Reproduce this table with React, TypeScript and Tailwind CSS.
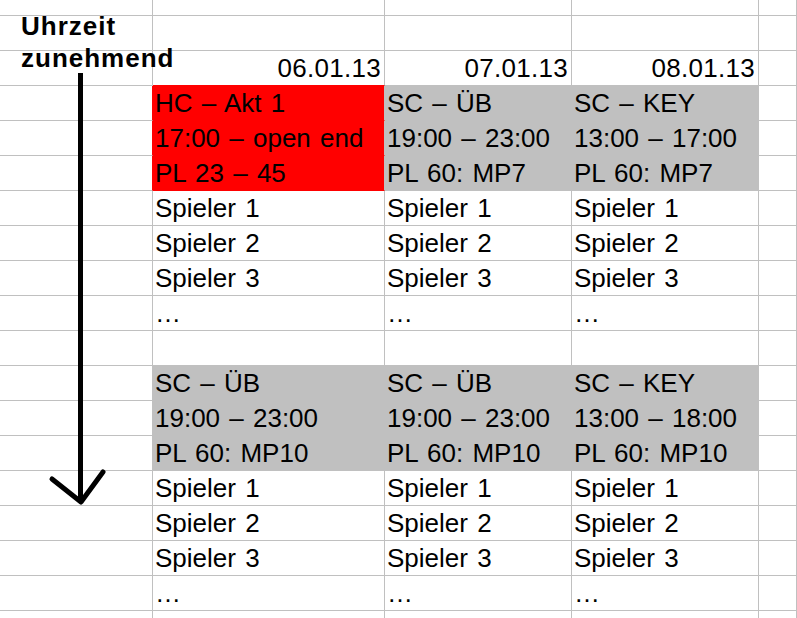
import React from "react";

type Fill = "" | "red" | "gray";
type Cell = { t?: string; f?: Fill; r?: boolean };

const bgCls: Record<Fill, string> = { "": "bg-white", red: "bg-[#ff0000]", gray: "bg-[#c0c0c0]" };
const brCls: Record<Fill, string> = { "": "border-r-[#c0c0c0]", red: "border-r-[#ff0000]", gray: "border-r-[#c0c0c0]" };
const bbCls: Record<Fill, string> = { "": "border-b-[#c0c0c0]", red: "border-b-[#ff0000]", gray: "border-b-[#c0c0c0]" };

const E: Cell = {};
const blank = (): Cell[] => [E, E, E, E, E];
const g = (t: string): Cell => ({ t, f: "gray" });
const w = (t: string): Cell => ({ t });

const rows: Cell[][] = [
  blank(),
  blank(),
  [E, { t: "06.01.13", r: true }, { t: "07.01.13", r: true }, { t: "08.01.13", r: true }, E],
  [E, { t: "HC – Akt 1", f: "red" }, g("SC – ÜB"), g("SC – KEY"), E],
  [E, { t: "17:00 – open end", f: "red" }, g("19:00 – 23:00"), g("13:00 – 17:00"), E],
  [E, { t: "PL 23 – 45", f: "red" }, g("PL 60: MP7"), g("PL 60: MP7"), E],
  [E, w("Spieler 1"), w("Spieler 1"), w("Spieler 1"), E],
  [E, w("Spieler 2"), w("Spieler 2"), w("Spieler 2"), E],
  [E, w("Spieler 3"), w("Spieler 3"), w("Spieler 3"), E],
  [E, w("…"), w("…"), w("…"), E],
  blank(),
  [E, g("SC – ÜB"), g("SC – ÜB"), g("SC – KEY"), E],
  [E, g("19:00 – 23:00"), g("19:00 – 23:00"), g("13:00 – 18:00"), E],
  [E, g("PL 60: MP10"), g("PL 60: MP10"), g("PL 60: MP10"), E],
  [E, w("Spieler 1"), w("Spieler 1"), w("Spieler 1"), E],
  [E, w("Spieler 2"), w("Spieler 2"), w("Spieler 2"), E],
  [E, w("Spieler 3"), w("Spieler 3"), w("Spieler 3"), E],
  [E, w("…"), w("…"), w("…"), E],
  blank(),
];

export default function App() {
  return (
    <div className="relative w-[797px] h-[618px] overflow-hidden bg-white text-black font-['Liberation_Sans',Arial,sans-serif]">
      <div className="grid grid-cols-[153px_232px_187px_187px_1fr] grid-rows-[16px_repeat(18,35px)]">
        {rows.map((row, ri) =>
          row.map((c, ci) => {
            const own: Fill = c.f ?? "";
            const rightN: Fill = row[ci + 1]?.f ?? "";
            const belowN: Fill = rows[ri + 1]?.[ci]?.f ?? "";
            const br: Fill = rightN || own;
            const bb: Fill = belowN || own;
            return (
              <div
                key={`${ri}-${ci}`}
                className={`border-r border-b border-solid ${brCls[br]} ${bbCls[bb]} ${bgCls[own]} whitespace-nowrap text-[26px] leading-[35px] [word-spacing:2px] ${c.r ? "text-right pr-[3px] tracking-[0.3px]" : "pl-[2px]"}`}
              >
                {c.t ?? ""}
              </div>
            );
          })
        )}
      </div>

      <div className="absolute left-[21px] top-[10px] font-bold text-[26px] leading-[32px] tracking-[1px] whitespace-nowrap">
        <div>Uhrzeit</div>
        <div>zunehmend</div>
      </div>

      <svg className="absolute left-0 top-0 pointer-events-none" width="797" height="618" viewBox="0 0 797 618">
        <line x1="80.5" y1="73" x2="80.5" y2="500" stroke="#000" strokeWidth="5" />
        <polyline points="52,479 81,502 103,472" fill="none" stroke="#000" strokeWidth="5" strokeLinejoin="round" strokeLinecap="round" />
      </svg>
    </div>
  );
}
